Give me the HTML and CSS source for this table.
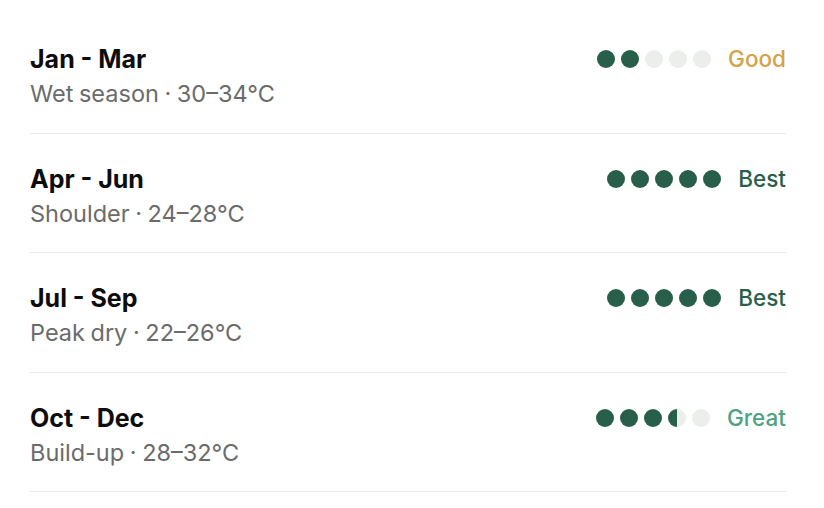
FILE: index.html
```html
<!DOCTYPE html>
<html>
<head>
<meta charset="utf-8">
<link rel="stylesheet" href="styles.css">
</head>
<body>
<div class="list">
  <div class="row">
    <div class="info">
      <div class="title">Jan - Mar</div>
      <div class="sub">Wet season · 30–34°C</div>
    </div>
    <div class="rating">
      <div class="dots"><span class="dot on"></span><span class="dot on"></span><span class="dot"></span><span class="dot"></span><span class="dot"></span></div>
      <span class="label good">Good</span>
    </div>
  </div>
  <div class="row">
    <div class="info">
      <div class="title">Apr - Jun</div>
      <div class="sub">Shoulder · 24–28°C</div>
    </div>
    <div class="rating">
      <div class="dots"><span class="dot on"></span><span class="dot on"></span><span class="dot on"></span><span class="dot on"></span><span class="dot on"></span></div>
      <span class="label best">Best</span>
    </div>
  </div>
  <div class="row">
    <div class="info">
      <div class="title">Jul - Sep</div>
      <div class="sub">Peak dry · 22–26°C</div>
    </div>
    <div class="rating">
      <div class="dots"><span class="dot on"></span><span class="dot on"></span><span class="dot on"></span><span class="dot on"></span><span class="dot on"></span></div>
      <span class="label best">Best</span>
    </div>
  </div>
  <div class="row">
    <div class="info">
      <div class="title">Oct - Dec</div>
      <div class="sub">Build-up · 28–32°C</div>
    </div>
    <div class="rating">
      <div class="dots"><span class="dot on"></span><span class="dot on"></span><span class="dot on"></span><span class="dot half"></span><span class="dot"></span></div>
      <span class="label great">Great</span>
    </div>
  </div>
</div>
</body>
</html>
```
FILE: styles.css
```css
html, body {
  margin: 0;
  padding: 0;
  background: #ffffff;
}
body {
  font-family: Inter, "Noto Sans", sans-serif;
  color: #111111;
}
.list {
  padding: 14px 38px 0 30px;
}
.row {
  display: flex;
  justify-content: space-between;
  align-items: flex-start;
  padding: 30px 0 23.5px;
  border-bottom: 1px solid #ebebeb;
}
.info {
  display: flex;
  flex-direction: column;
  gap: 5px;
}
.title {
  font-size: 25px;
  font-weight: 700;
  line-height: 30px;
  color: #0d0d0d;
}
.sub {
  font-size: 23.5px;
  font-weight: 400;
  line-height: 30px;
  color: #6b6b6b;
  word-spacing: -1px;
}
.rating {
  display: flex;
  align-items: center;
  gap: 17px;
  height: 30px;
}
.dots {
  display: flex;
  gap: 6px;
}
.dot {
  width: 18px;
  height: 18px;
  border-radius: 50%;
  background: #ebeeeb;
}
.dot.on {
  background: #285f4b;
}
.dot.half {
  background: linear-gradient(to right, #285f4b 50%, #ebeeeb 50%);
}
.label {
  font-size: 22.5px;
  font-weight: 500;
  line-height: 30px;
}
.good { color: #d4a24a; }
.best { color: #285f4b; }
.great { color: #4ea380; }
```
